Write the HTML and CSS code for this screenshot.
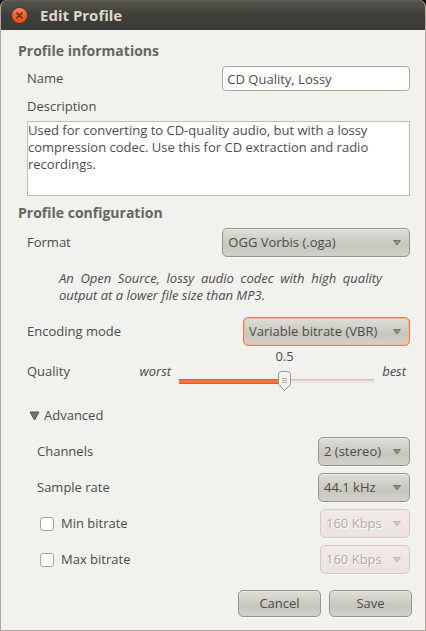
FILE: index.html
```
<!DOCTYPE html>
<html lang="en">
<head>
    <meta charset="UTF-8">
    <meta name="viewport" content="width=device-width, initial-scale=1.0">
    <title>Edit Profile</title>
    <link rel="stylesheet" href="styles.css">
</head>
<body>
    <form class="dialog">
        <header class="titlebar">
            <button type="button" class="close" aria-label="Close">
                <svg width="17" height="17" viewBox="0 0 17 17">
                    <defs>
                        <linearGradient id="close-fill" x1="0" y1="0" x2="0" y2="1">
                            <stop offset="0" stop-color="#f9906a"/>
                            <stop offset="0.5" stop-color="#f4582a"/>
                            <stop offset="1" stop-color="#f4501a"/>
                        </linearGradient>
                    </defs>
                    <circle cx="8.5" cy="8.5" r="8" fill="#33322e"/>
                    <circle cx="8.5" cy="8.5" r="7.6" fill="url(#close-fill)"/>
                    <path d="M5.500 5.500l6 6M11.500 5.500l-6 6" stroke="#4a2a1c" stroke-width="1.2"/>
                </svg>
            </button>
            <h1>Edit Profile</h1>
        </header>

        <div class="content">
            <h2>Profile informations</h2>
            <div class="row name-row">
                <label for="name">Name</label>
                <input id="name" name="name" type="text" value="CD Quality, Lossy">
            </div>
            <label class="description-label" for="description">Description</label>
            <textarea id="description" name="description" spellcheck="false">Used for converting to CD-quality audio, but with a lossy compression codec. Use this for CD extraction and radio recordings.</textarea>

            <h2>Profile configuration</h2>
            <div class="row format-row">
                <label for="format">Format</label>
                <select id="format" name="format" class="wide">
                    <option>OGG Vorbis (.oga)</option>
                </select>
            </div>
            <p class="hint">An Open Source, lossy audio codec with high quality output at a lower file size than MP3.</p>
            <div class="row">
                <label for="mode">Encoding mode</label>
                <select id="mode" name="mode" class="focused">
                    <option>Variable bitrate (VBR)</option>
                </select>
            </div>
            <div class="row quality-row">
                <label for="quality">Quality</label>
                <em>worst</em>
                <div class="scale">
                    <output for="quality">0.5</output>
                    <input id="quality" name="quality" type="range" min="-0.1" max="1" step="0.1" value="0.5">
                </div>
                <em>best</em>
            </div>

            <details open>
                <summary>
                    <svg width="11" height="10" viewBox="0 0 11 10">
                        <path d="M1 1h9L5.500 9z" fill="#75756c" stroke="#56564f"/>
                    </svg>
                    Advanced
                </summary>
                <div class="advanced">
                    <div class="row">
                        <label for="channels">Channels</label>
                        <select id="channels" name="channels" class="short">
                            <option>2 (stereo)</option>
                        </select>
                    </div>
                    <div class="row">
                        <label for="rate">Sample rate</label>
                        <select id="rate" name="rate" class="short">
                            <option>44.1 kHz</option>
                        </select>
                    </div>
                    <div class="row">
                        <label class="check"><input type="checkbox" name="use-min">Min bitrate</label>
                        <select name="min-bitrate" class="bitrate" aria-label="Min bitrate" disabled>
                            <option>160 Kbps</option>
                        </select>
                    </div>
                    <div class="row">
                        <label class="check"><input type="checkbox" name="use-max">Max bitrate</label>
                        <select name="max-bitrate" class="bitrate" aria-label="Max bitrate" disabled>
                            <option>160 Kbps</option>
                        </select>
                    </div>
                </div>
            </details>
        </div>

        <footer class="actions">
            <button type="button">Cancel</button>
            <button type="submit">Save</button>
        </footer>
    </form>
</body>
</html>
```

FILE: styles.css
```
* {
    box-sizing: border-box;
}

body {
    margin: 0;
    background-color: #100e0c;
    color: #4c4c4c;
    font: 13px/17px "Open Sans", "Noto Sans", sans-serif;
}

input,
textarea,
select,
button {
    font: inherit;
    color: inherit;
    margin: 0;
}

.dialog {
    display: flex;
    flex-direction: column;
    min-height: 100vh;
    border: 1px solid #b5a49e;
    border-top: none;
    border-radius: 7px 7px 0 0;
    background-color: #f1f1ed;
    overflow: hidden;
}

.titlebar {
    display: flex;
    align-items: center;
    gap: 12px;
    height: 30px;
    padding: 0 10px;
    border-top: 1px solid #5c5b54;
    background: linear-gradient(#55544c, #3e3e3a 50%, #3a3a37);
}

.titlebar h1 {
    margin: 0;
    font-size: 15px;
    color: #dfd8c8;
}

.close {
    display: flex;
    padding: 0;
    border: none;
    background: none;
}

.content {
    display: flex;
    flex-direction: column;
    padding: 12px 15px 0 26px;
}

h2 {
    margin: 0 0 7px -9px;
    font-size: 14px;
    line-height: 17px;
    color: #666560;
}

.row {
    display: flex;
    align-items: center;
    justify-content: space-between;
}

.name-row input {
    width: 49%;
    height: 25px;
    padding: 0 4px;
    border: 1px solid #b5a49e;
    border-radius: 4px;
    background-color: #fff;
}

.description-label {
    margin: 7px 0 6px;
}

textarea {
    height: 75px;
    margin-bottom: 8px;
    padding: 0;
    border: 1px solid #c0bcb2;
    background-color: #fff;
    resize: none;
}

select,
.actions button {
    border: 1px solid #96968a;
    border-radius: 5px;
    background: linear-gradient(#deded6, #cbcbc2 50%, #c6c6bc 60%, #d2d2ca);
    box-shadow: inset 0 1px #eaeae4, 0 1px #fafaf8;
}

select {
    appearance: none;
    height: 29px;
    padding: 0 28px 0 5px;
    background: url("data:image/svg+xml,%3Csvg xmlns='http://www.w3.org/2000/svg' width='8' height='6'%3E%3Cpath d='M.5.5h7L4 5z' fill='%2390908a' stroke='%2374746d'/%3E%3C/svg%3E") no-repeat right 8px center, linear-gradient(#deded6, #cbcbc2 50%, #c6c6bc 60%, #d2d2ca);
}

select:disabled {
    border-color: #d8c8c4;
    background: url("data:image/svg+xml,%3Csvg xmlns='http://www.w3.org/2000/svg' width='8' height='6'%3E%3Cpath d='M.5.5h7L4 5z' fill='%23d0c8c4' stroke='%23bcb4b0'/%3E%3C/svg%3E") no-repeat right 8px center, linear-gradient(#f2eae8, #eae3e0);
    color: #b0a9a6;
    text-shadow: 1px 1px #fff;
    opacity: 1;
}

.wide {
    width: 49%;
}

.short {
    width: 92px;
}

.bitrate {
    width: 90px;
}

.focused {
    width: 167px;
    border-color: #f07746;
    box-shadow: inset 0 0 0 1px #f6b598;
}

.hint {
    margin: 13px 28px 13px 32px;
    font-style: italic;
    text-align: justify;
}

.quality-row {
    gap: 8px;
    margin-bottom: 12px;
    padding: 2px 4px 0 0;
}

.quality-row label {
    flex: 1;
}

.scale {
    width: 195px;
}

.scale output {
    display: block;
    padding-left: 16px;
    text-align: center;
}

.scale input {
    display: block;
    appearance: none;
    width: 100%;
    height: 20px;
    margin: 6px 0 4px;
    border-radius: 3px;
    background:
        linear-gradient(#e8501c, #fd7a48 40%, #fb6b35 70%, #e8501c) no-repeat left center / 54% 5px,
        linear-gradient(#c8bab5, #e9e1dd 40%, #f4f0ed) no-repeat center / 100% 5px;
}

.scale input::-webkit-slider-runnable-track {
    height: 20px;
}

.scale input::-webkit-slider-thumb {
    appearance: none;
    width: 13px;
    height: 20px;
    background: url("data:image/svg+xml,%3Csvg xmlns='http://www.w3.org/2000/svg' width='13' height='20'%3E%3Cpath d='M.5 3.5q0-3 3-3h6q3 0 3 3v10L6.500 19.500l-6-6z' fill='%23f4f1ee' stroke='%23a0938e'/%3E%3Cpath d='M4 7.500h5M4 9.500h5M4 11.500h5' stroke='%23b8b0aa'/%3E%3C/svg%3E");
}

summary {
    display: flex;
    align-items: center;
    gap: 4px;
    padding-left: 2px;
    list-style: none;
}

.advanced {
    display: flex;
    flex-direction: column;
    gap: 7px;
    padding: 13px 0 0 10px;
}

.check {
    display: flex;
    align-items: center;
    gap: 7px;
    padding-left: 3px;
}

.check input {
    appearance: none;
    width: 14px;
    height: 14px;
    border: 1px solid #ada09a;
    border-radius: 3px;
    background-color: #fff;
}

.actions {
    display: flex;
    justify-content: flex-end;
    gap: 8px;
    padding: 16px 13px 13px;
}

.actions button {
    width: 83px;
    height: 27px;
    padding: 0;
}
```
